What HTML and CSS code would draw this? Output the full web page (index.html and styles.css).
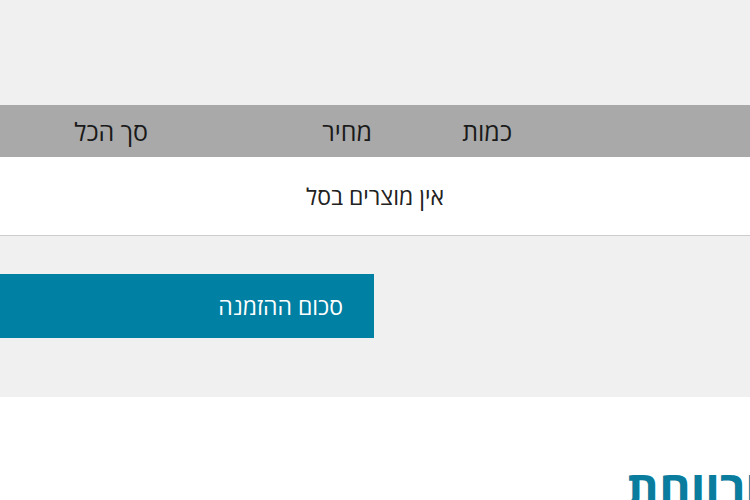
FILE: index.html
```html
<!DOCTYPE html>
<html lang="he" dir="rtl">
<head>
    <meta charset="utf-8">
    <title>סל קניות</title>
    <link rel="stylesheet" href="styles.css">
</head>
<body>
    <div class="cart">
        <div class="cart-head">
            <div class="cell"></div>
            <div class="cell">כמות</div>
            <div class="cell">מחיר</div>
            <div class="cell">סך הכל</div>
        </div>
        <div class="cart-empty">אין מוצרים בסל</div>
        <div class="cart-actions">
            <button class="order-btn" type="button">סכום ההזמנה</button>
        </div>
    </div>
    <div class="info">
        <h2 class="info-title">ורווחת</h2>
    </div>
</body>
</html>
```

FILE: styles.css
```css
body {
    margin: 0;
    font-family: "Open Sans", "DejaVu Sans", sans-serif;
    color: #222;
    background: #fff;
    overflow: hidden;
}
.cart {
    background-color: #f0f0f0;
    padding-top: 105px;
    padding-bottom: 59px;
}
.cart-head {
    display: grid;
    grid-template-columns: 238px 140px 224px 1fr;
    height: 52px;
    align-items: center;
    background-color: #a9a9a9;
    font-size: 25px;
    color: #1a1a1a;
}
.cart-empty {
    background: #fff;
    height: 78px;
    line-height: 78px;
    text-align: center;
    font-size: 23px;
    border-bottom: 1px solid #cdcdcd;
}
.cart-actions {
    display: flex;
    justify-content: flex-end;
    padding-top: 38px;
}
.order-btn {
    width: 374px;
    height: 64px;
    border: none;
    background-color: #0080a3;
    color: #fff;
    font-family: inherit;
    font-size: 23px;
    text-align: right;
    padding: 0 31px 0 0;
}
.info {
    padding-top: 58px;
}
.info-title {
    margin: 0 -10px 0 0;
    font-size: 48px;
    font-weight: bold;
    color: #0a7d9e;
}
```
